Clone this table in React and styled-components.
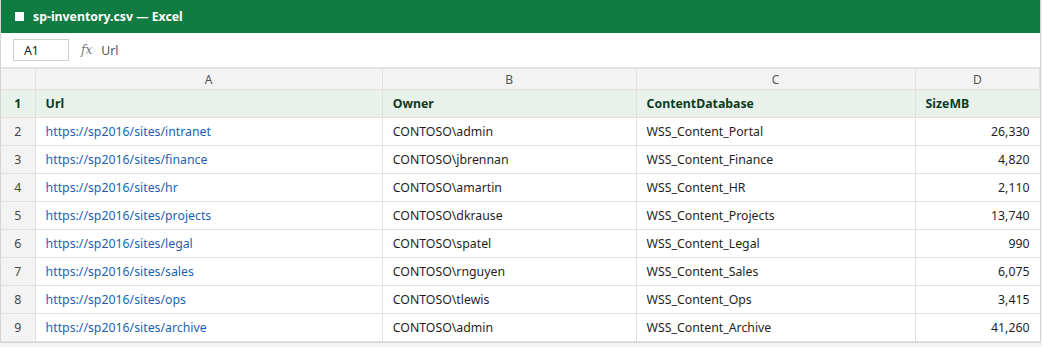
import React from "react";
import styled, { createGlobalStyle } from "styled-components";

const GlobalStyle = createGlobalStyle`
  html, body {
    margin: 0;
    padding: 0;
    background: #f3f3f3;
  }
  body {
    font-family: "Noto Sans", "Open Sans", sans-serif;
    font-size: 12.3px;
    color: #1f1f1f;
  }
`;

const columns = [
  { key: "A", label: "Url", width: 346 },
  { key: "B", label: "Owner", width: 253 },
  { key: "C", label: "ContentDatabase", width: 278 },
  { key: "D", label: "SizeMB", width: 124, numeric: true },
];

const rows = [
  ["https://sp2016/sites/intranet", "CONTOSO\\admin", "WSS_Content_Portal", "26,330"],
  ["https://sp2016/sites/finance", "CONTOSO\\jbrennan", "WSS_Content_Finance", "4,820"],
  ["https://sp2016/sites/hr", "CONTOSO\\amartin", "WSS_Content_HR", "2,110"],
  ["https://sp2016/sites/projects", "CONTOSO\\dkrause", "WSS_Content_Projects", "13,740"],
  ["https://sp2016/sites/legal", "CONTOSO\\spatel", "WSS_Content_Legal", "990"],
  ["https://sp2016/sites/sales", "CONTOSO\\rnguyen", "WSS_Content_Sales", "6,075"],
  ["https://sp2016/sites/ops", "CONTOSO\\tlewis", "WSS_Content_Ops", "3,415"],
  ["https://sp2016/sites/archive", "CONTOSO\\admin", "WSS_Content_Archive", "41,260"],
];

const Window = styled.div`
  width: 1039px;
  border: 1px solid #d4d4d4;
  border-top: none;
  background: #fff;
`;

const TitleBar = styled.div`
  height: 33px;
  background: #107c41;
  color: #fff;
  display: flex;
  align-items: center;
  gap: 9px;
  padding-left: 14px;
  font-weight: 700;
`;

const TitleSquare = styled.span`
  width: 9px;
  height: 9px;
  background: #fff;
  display: inline-block;
`;

const FormulaBar = styled.div`
  height: 34px;
  display: flex;
  align-items: center;
  padding-left: 12px;
  border-bottom: 2px solid #e3e3e3;
  background: #fff;
`;

const NameBox = styled.div`
  width: 44px;
  height: 20px;
  border: 1px solid #cfcfcf;
  display: flex;
  align-items: center;
  padding-left: 10px;
  color: #222;
`;

const Fx = styled.span`
  margin-left: 12px;
  font-family: "DejaVu Serif", "Liberation Serif", serif;
  font-style: italic;
  font-size: 12px;
  color: #777;
`;

const FormulaText = styled.span`
  margin-left: 9px;
  color: #555;
`;

const Grid = styled.table`
  border-collapse: collapse;
  table-layout: fixed;
  width: 1039px;
`;

const ColHead = styled.th`
  height: 20px;
  padding: 0;
  background: #f3f3f3;
  border: 1px solid #e1e1e1;
  border-top: none;
  font-weight: 400;
  color: #555;
  font-size: 12px;
  text-align: center;
  &:first-child {
    border-left: none;
  }
`;

const RowNum = styled.td`
  background: ${(p) => (p.$head ? "#e8f2ea" : "#f3f3f3")};
  border: 1px solid #e1e1e1;
  border-left: none;
  text-align: center;
  color: ${(p) => (p.$head ? "#0d3b1f" : "#444")};
  font-weight: ${(p) => (p.$head ? 700 : 400)};
  padding: 0;
`;

const Cell = styled.td`
  height: 27px;
  padding: 0 10px;
  border: 1px solid #e1e1e1;
  white-space: nowrap;
  overflow: hidden;
  text-align: ${(p) => (p.$numeric ? "right" : "left")};
  color: ${(p) => (p.$head ? "#0d3b1f" : p.$link ? "#1d5fb3" : "#1f1f1f")};
  background: ${(p) => (p.$head ? "#e8f2ea" : "#fff")};
  font-weight: ${(p) => (p.$head ? 700 : 400)};
  &:last-child {
    border-right: none;
  }
`;

export default function App() {
  return (
    <>
      <GlobalStyle />
      <Window>
        <TitleBar>
          <TitleSquare />
          sp-inventory.csv — Excel
        </TitleBar>
        <FormulaBar>
          <NameBox>A1</NameBox>
          <Fx>fx</Fx>
          <FormulaText>Url</FormulaText>
        </FormulaBar>
        <Grid>
          <colgroup>
            <col style={{ width: 34 }} />
            {columns.map((c) => (
              <col key={c.key} style={{ width: c.width }} />
            ))}
          </colgroup>
          <thead>
            <tr>
              <ColHead />
              {columns.map((c) => (
                <ColHead key={c.key}>{c.key}</ColHead>
              ))}
            </tr>
          </thead>
          <tbody>
            <tr>
              <RowNum $head>1</RowNum>
              {columns.map((c) => (
                <Cell key={c.key} $head>
                  {c.label}
                </Cell>
              ))}
            </tr>
            {rows.map((r, i) => (
              <tr key={i}>
                <RowNum>{i + 2}</RowNum>
                {r.map((v, j) => (
                  <Cell key={j} $link={j === 0} $numeric={columns[j].numeric}>
                    {v}
                  </Cell>
                ))}
              </tr>
            ))}
          </tbody>
        </Grid>
      </Window>
    </>
  );
}
